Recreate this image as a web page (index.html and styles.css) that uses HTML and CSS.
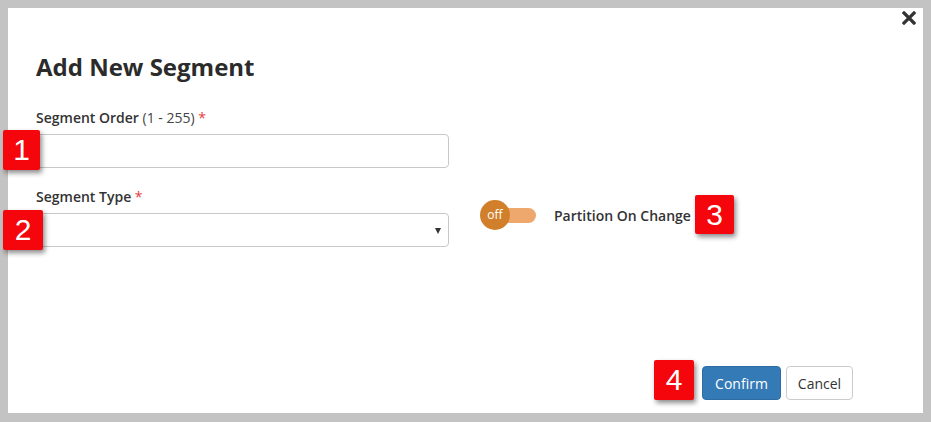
FILE: index.html
```html
<!DOCTYPE html>
<html>
<head>
<meta charset="utf-8">
<link rel="stylesheet" href="styles.css">
</head>
<body>
<div class="panel">
  <button class="close" aria-label="Close">
    <svg width="14" height="14" viewBox="0 0 14 14"><path d="M2 2 L12 12 M12 2 L2 12" stroke="#333" stroke-width="3.2" stroke-linecap="square"/></svg>
  </button>
  <h1 class="title">Add New Segment</h1>
  <div class="group">
    <label class="label">Segment Order <span class="hint">(1 - 255)</span> <span class="req">*</span></label>
    <div class="input"></div>
  </div>
  <div class="row">
    <div class="group group-type">
      <label class="label">Segment Type <span class="req">*</span></label>
      <div class="input select"><span class="caret"></span></div>
    </div>
    <div class="switch-row">
      <div class="switch">
        <span class="track"></span>
        <span class="knob">off</span>
      </div>
      <span class="switch-label">Partition On Change</span>
    </div>
  </div>
  <div class="footer">
    <button class="btn btn-primary">Confirm</button>
    <button class="btn btn-default">Cancel</button>
  </div>
</div>
<div class="badge b1">1</div>
<div class="badge b2">2</div>
<div class="badge b3">3</div>
<div class="badge b4">4</div>
</body>
</html>
```
FILE: styles.css
```css
html, body {
  margin: 0;
  padding: 0;
}
body {
  background: #c3c3c3;
  padding: 8px 8px 9px 8px;
  width: 931px;
  height: 422px;
  box-sizing: border-box;
  position: relative;
  font-family: "Open Sans", "Liberation Sans", sans-serif;
  color: #333;
}
.panel {
  background: #fff;
  width: 915px;
  height: 405px;
  box-sizing: border-box;
  padding: 44px 0 13px 28px;
  position: relative;
  display: flex;
  flex-direction: column;
}
.close {
  position: absolute;
  top: 3px;
  right: 7px;
  border: 0;
  background: transparent;
  padding: 0;
  width: 14px;
  height: 14px;
  display: flex;
}
.title {
  margin: 0;
  font-size: 24px;
  line-height: 30px;
  font-weight: 700;
  color: #2b2b2b;
}
.group {
  display: flex;
  flex-direction: column;
  width: 413px;
}
.title + .group {
  margin-top: 27px;
}
.label {
  font-size: 14px;
  line-height: 18px;
  font-weight: 600;
  color: #333;
  margin-bottom: 7px;
}
.hint {
  font-weight: 400;
  color: #444;
}
.req {
  color: #e83c3c;
  font-weight: 400;
}
.input {
  height: 34px;
  box-sizing: border-box;
  border: 1px solid #c8c8c8;
  border-radius: 4px;
  background: #fff;
}
.select {
  display: flex;
  align-items: center;
  justify-content: flex-end;
  padding-right: 7px;
}
.caret {
  width: 0;
  height: 0;
  border-left: 3px solid transparent;
  border-right: 3px solid transparent;
  border-top: 6px solid #333;
  margin-top: 1px;
}
.row {
  display: flex;
  margin-top: 20px;
}
.switch-row {
  display: flex;
  align-items: center;
  margin-left: 31px;
  margin-top: 12px;
  height: 30px;
}
.switch {
  position: relative;
  width: 56px;
  height: 30px;
  display: flex;
  align-items: center;
}
.track {
  display: block;
  margin-left: 18px;
  width: 38px;
  height: 15px;
  border-radius: 8px;
  background: #eea86e;
}
.knob {
  position: absolute;
  left: 0;
  top: 0;
  width: 30px;
  height: 30px;
  border-radius: 50%;
  background: #d27f2b;
  color: #fff;
  font-size: 12px;
  line-height: 29px;
  text-align: center;
}
.switch-label {
  margin-left: 18px;
  font-size: 14px;
  font-weight: 600;
  color: #333;
}
.footer {
  margin-top: auto;
  display: flex;
  justify-content: flex-end;
  gap: 5px;
  padding-right: 70px;
}
.btn {
  height: 34px;
  box-sizing: border-box;
  border-radius: 4px;
  font-family: "Open Sans", "Liberation Sans", sans-serif;
  font-size: 14px;
  padding: 0;
}
.btn-primary {
  background: #337ab7;
  border: 1px solid #2e6da4;
  color: #fff;
  width: 79px;
}
.btn-default {
  background: #fff;
  border: 1px solid #ccc;
  color: #333;
  width: 67px;
}
.badge {
  position: absolute;
  width: 40px;
  height: 40px;
  background: #f5060c;
  color: #fff;
  font-family: "Liberation Sans", Arial, sans-serif;
  font-size: 30px;
  line-height: 40px;
  text-align: center;
  border-radius: 2px;
  box-shadow: 2px 3px 5px rgba(0, 0, 0, 0.45);
}
.b1 { left: 3px; top: 130px; width: 37px; }
.b2 { left: 3px; top: 210px; }
.b3 { left: 695px; top: 195px; width: 39px; height: 39px; line-height: 39px; }
.b4 { left: 654px; top: 360px; }
```
